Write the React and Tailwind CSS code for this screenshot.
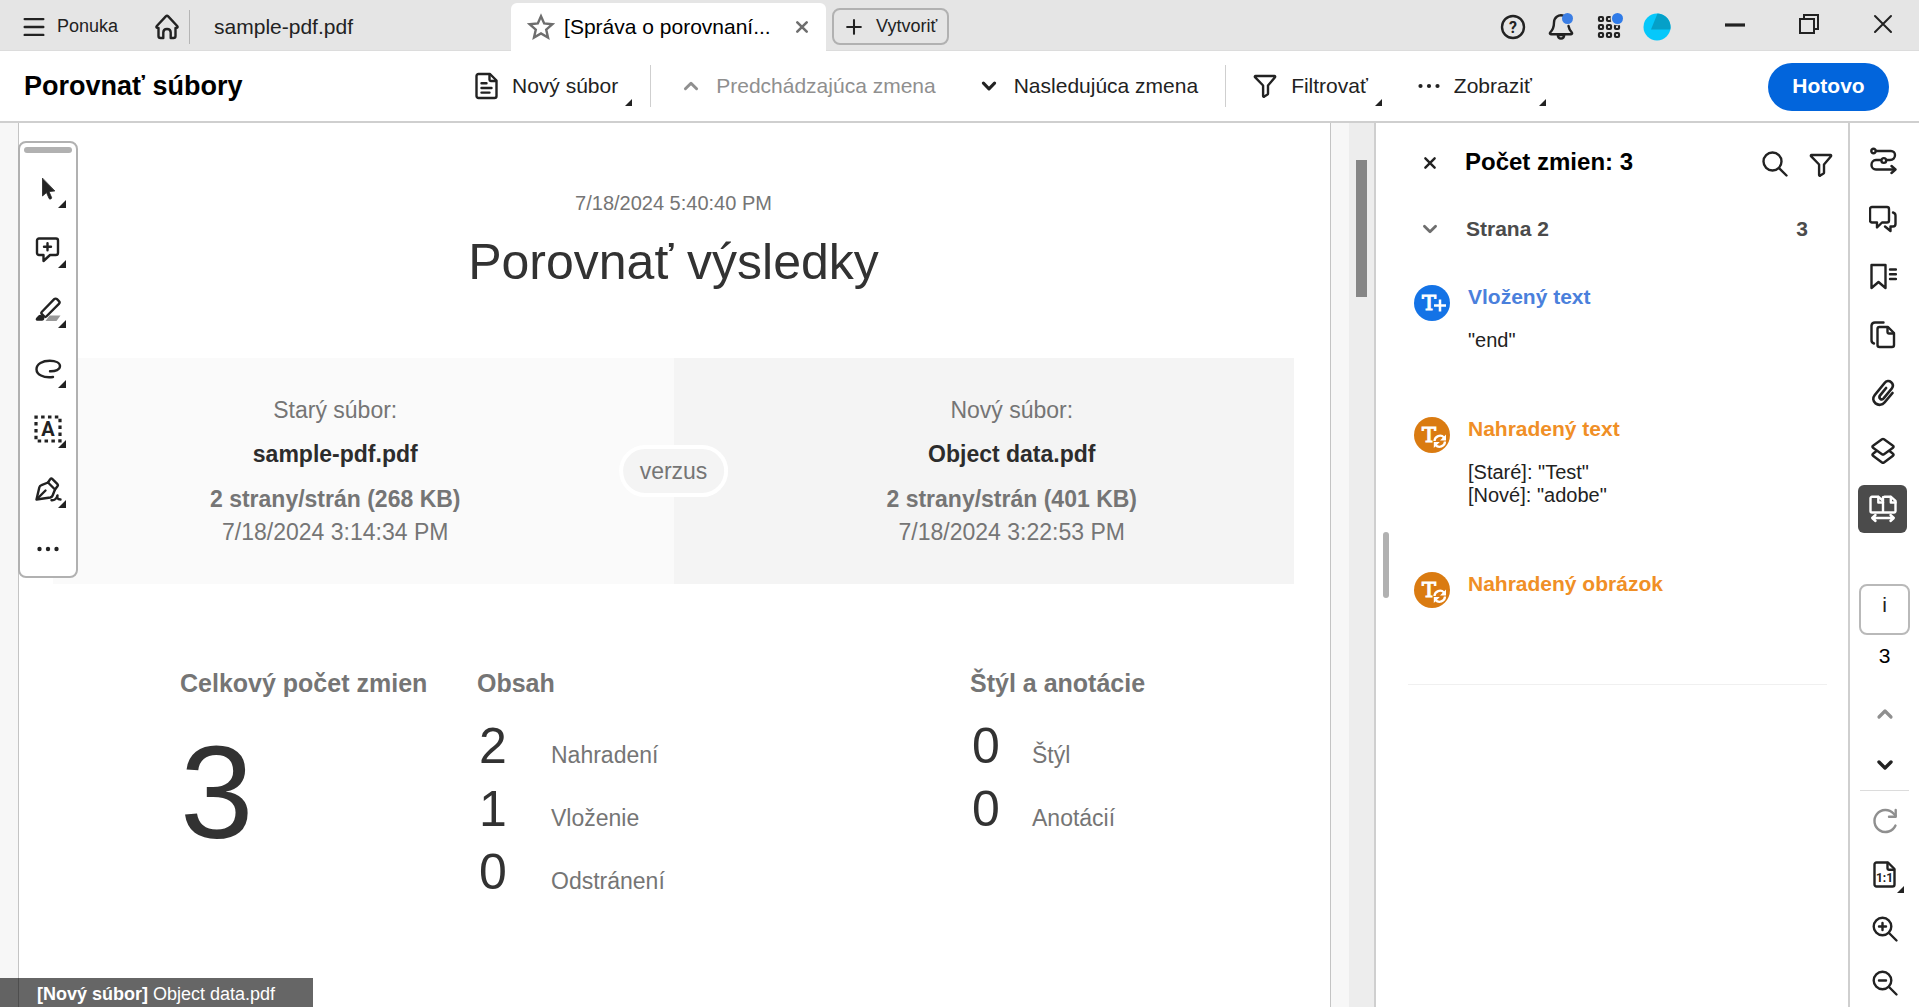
import { useState } from "react";

function Icon({ size = 28, stroke = 2.4, className = "", children }) {
  return (
    <svg
      width={size}
      height={size}
      viewBox="0 0 28 28"
      fill="none"
      stroke="currentColor"
      strokeWidth={stroke}
      strokeLinecap="round"
      strokeLinejoin="round"
      aria-hidden="true"
      className={`shrink-0 ${className}`}
    >
      {children}
    </svg>
  );
}

function Corner({ className = "" }) {
  return (
    <svg viewBox="0 0 8 8" aria-hidden="true" className={`absolute fill-[#222] ${className}`}>
      <path d="M8 0v8H0z" />
    </svg>
  );
}

const FunnelShape = () => (
  <path d="M4.5 4h19c.6 0 .9.7.5 1.2l-7 8.3v8.2c0 .4-.2.7-.5.9l-3.2 2c-.6.3-1.2 0-1.2-.6V13.500L4 5.200C3.600 4.700 3.900 4 4.500 4z" />
);

const ChevronUp = (props) => (
  <Icon {...props}>
    <path d="M8 17l6-6 6 6" />
  </Icon>
);

const ChevronDown = (props) => (
  <Icon {...props}>
    <path d="M8 11l6 6 6-6" />
  </Icon>
);

const Dots = () => (
  <Icon>
    <g fill="currentColor" stroke="none">
      <circle cx="5.500" cy="14" r="2.100" />
      <circle cx="14" cy="14" r="2.100" />
      <circle cx="22.500" cy="14" r="2.100" />
    </g>
  </Icon>
);

const quickTools = [
  {
    name: "Vybrať",
    corner: true,
    icon: (
      <path
        d="M8.500 3.500v17.500l4-3.400 2.600 6c.5 1.100 3 .2 2.500-1.100l-2.600-5.900 5.500-.6z"
        fill="currentColor"
        strokeWidth="0.800"
      />
    ),
  },
  {
    name: "Pridať komentár",
    corner: true,
    icon: (
      <>
        <path d="M5 3.500h17a2 2 0 0 1 2 2V18a2 2 0 0 1-2 2h-6l-6.500 6v-6H5a2 2 0 0 1-2-2V5.500a2 2 0 0 1 2-2z" />
        <path d="M13.500 8.300v6.900M10 11.800h7" />
      </>
    ),
  },
  {
    name: "Zvýrazniť",
    corner: true,
    icon: (
      <>
        <path d="M15.500 20.500h11l-4 5.500h-11z" fill="#999" stroke="none" />
        <path d="M7.700 17L20.200 4.200c.8-.8 2-.8 2.800 0l1.900 1.900c.8.8.8 2 0 2.800L12.300 21.500c-.6.600-1.300.6-1.900 0l-2.700-2.600c-.6-.600-.6-1.300 0-1.900z" />
        <path d="M5 21c1-.9 3-.4 4.200 1.200.9 1.300.3 2.800-1 2.800H3.200c-.9 0-.9-.8-.5-1.500z" fill="currentColor" strokeWidth="1.500" />
      </>
    ),
  },
  {
    name: "Kresliť",
    corner: true,
    icon: (
      <path d="M16 16.300c5.500.2 10-1.700 10-5.200 0-3.300-4.300-5.300-10.200-5.300C8.500 5.800 2.500 9 2.500 14.200c0 5.200 6.500 9.100 16.500 7.800" />
    ),
  },
  {
    name: "Pridať text",
    corner: true,
    icon: (
      <>
        <rect x="2" y="2" width="24" height="24" strokeWidth="3.200" strokeDasharray="3.500 3.357" strokeDashoffset="1.750" strokeLinecap="butt" strokeLinejoin="miter" />
        <text x="14" y="20.500" textAnchor="middle" fontFamily="Roboto" fontWeight="700" fontSize="20" fill="currentColor" stroke="none">
          A
        </text>
      </>
    ),
  },
  {
    name: "Podpísať",
    corner: true,
    icon: (
      <>
        <path d="M2.500 24.500L5.300 12.500c.3-1.300 1-2 2.200-2.400l6.500-2.600 7 7-2.400 6c-.4 1.100-1.200 1.700-2.300 2L2.500 24.500z" />
        <path d="M14 7.500l2.200-3.300c.5-.8 1.400-.9 2-.3l5.300 5.300c.6.700.6 1.500 0 2L21 14.500M3.500 23.500l8-8" />
        <path d="M17.500 25.200c3.500.3 5-1.600 6-4.700-.5 2.600-.2 4 3 4" />
      </>
    ),
  },
  {
    name: "Ďalšie nástroje",
    icon: (
      <g fill="currentColor" stroke="none">
        <circle cx="5.500" cy="14" r="2.200" />
        <circle cx="14" cy="14" r="2.200" />
        <circle cx="22.500" cy="14" r="2.200" />
      </g>
    ),
  },
];

const railTools = [
  {
    name: "Postup",
    icon: (
      <>
        <circle cx="4.500" cy="4" r="2.200" />
        <path d="M7 4h15a4 4 0 0 1 4 4c0 3-2 5-5 5h-2.500M11.500 13H7a4.800 4.800 0 0 0-4.500 5 4.500 4.500 0 0 0 4.500 4.500h17.500" />
        <ellipse cx="14.800" cy="13.500" rx="2.400" ry="2.400" />
        <path d="M22.500 19l4 3.500-4 3.500" />
      </>
    ),
  },
  {
    name: "Komentáre",
    icon: (
      <>
        <path d="M3 2h15a2 2 0 0 1 2 2v11.500a2 2 0 0 1-2 2h-5L8 22.500v-5H3a2 2 0 0 1-2-2V4a2 2 0 0 1 2-2z" />
        <path d="M24 7.500c1.700.5 2.500 1.400 2.500 3V19a2.500 2.500 0 0 1-2.500 2.500h-2.500V26L16 21.500" />
      </>
    ),
  },
  {
    name: "Záložky",
    icon: (
      <>
        <path d="M2.500 2h14v23l-7-6-7 6z" />
        <path d="M21 6.500h6M21 11.300h6M21 16h6" />
      </>
    ),
  },
  {
    name: "Strany",
    icon: (
      <>
        <path d="M5 22.500A3.500 3.500 0 0 1 2.500 19V4.500A3.500 3.500 0 0 1 6 1.500h8.500" />
        <path d="M10.500 6h8.500l6 6v12a2 2 0 0 1-2 2H10.500a2 2 0 0 1-2-2V8a2 2 0 0 1 2-2z" />
        <path d="M18.500 6.500v4.800c0 .8.500 1.200 1.200 1.200h5" />
      </>
    ),
  },
  {
    name: "Prílohy",
    icon: (
      <path
        strokeWidth="2.700"
        d="M23.500 14l-8 9.500c-2.300 2.700-6.200 3-8.900.9-2.700-2.200-3-5.700-.8-8.400l9.800-12c1.700-2.100 4.600-2.400 6.600-.8 2 1.600 2.300 4.200.6 6.300l-8 9.700c-1 1.300-2.400 1.400-3.500.6-1.100-.9-1.200-2.300-.2-3.500l6-7.300"
      />
    ),
  },
  {
    name: "Vrstvy",
    icon: (
      <>
        <path d="M13 2.300c.6-.4 1.400-.4 2 0l9 6.500c.8.5.8 1.300 0 1.900l-9 6.500c-.6.400-1.400.4-2 0l-9-6.500c-.8-.6-.8-1.400 0-1.900z" />
        <path d="M7.500 14L4 16.800c-.8.600-.8 1.300 0 1.900l9 6.800c.6.400 1.400.4 2 0l9-6.800c.8-.6.8-1.300 0-1.900L20.500 14" />
      </>
    ),
  },
  {
    name: "Porovnať súbory",
    active: true,
    icon: (
      <>
        <path d="M14 2.200v15.300M3 1.800h6.500l4.500 4V17.500H3a1.500 1.500 0 0 1-1.500-1.500V3.300A1.500 1.500 0 0 1 3 1.800zM15.500 1.800H22l4.500 4V16a1.500 1.500 0 0 1-1.500 1.500H14" />
        <path d="M9.300 2v5.500H14M21.800 2v5.500h4.700" />
        <path d="M3.500 23h21M6.500 20l-3.300 3 3.300 3M21.500 20l3.300 3-3.300 3" />
      </>
    ),
  },
];

const changes = [
  { kind: "insert", title: "Vložený text", lines: ['"end"'] },
  { kind: "replace", title: "Nahradený text", lines: ['[Staré]: "Test"', '[Nové]: "adobe"'] },
  { kind: "replace", title: "Nahradený obrázok", lines: [] },
];

const contentStats = [
  [2, "Nahradení"],
  [1, "Vloženie"],
  [0, "Odstránení"],
];

const styleStats = [
  [0, "Štýl"],
  [0, "Anotácií"],
];

function TitleBar() {
  return (
    <header className="flex h-[51px] shrink-0 items-center border-b border-[#dcdcdc] bg-[#e5e5e5] pt-[3px] text-[18px] text-[#222]">
      <button className="flex items-center gap-2.5 pl-[21px]">
        <Icon size={26} stroke={2.6}>
          <path d="M4 5.500h20M4 14h20M4 22.500h20" />
        </Icon>
        Ponuka
      </button>
      <button aria-label="Domov" className="ml-[35px]">
        <Icon>
          <path d="M3.800 13L12.800 3.400c.7-.7 1.700-.7 2.400 0L24.200 13c.8.900.4 1.900-.7 1.900h-1V23a2 2 0 0 1-2 2h-2.800v-5.500c0-2.200-1.400-3.500-3.700-3.500s-3.700 1.300-3.700 3.500V25H7.500a2 2 0 0 1-2-2v-8.100h-1c-1.100 0-1.500-1-.7-1.900z" />
        </Icon>
      </button>
      <span className="ml-2 h-[34px] w-px bg-[#b5b5b5]"></span>
      <button className="h-full w-[321px] pl-6 text-left text-[21px]">sample-pdf.pdf</button>
      <div className="flex h-[48px] w-[315px] shrink-0 items-center rounded-t-md bg-white pl-4 pr-3 text-[21px] text-black">
        <Icon size={28} className="text-[#6e6e6e]">
          <path d="M14 3.200l3.200 7.300 8 .8-6 5.300 1.800 7.900-7-4.100-7 4.100 1.800-7.900-6-5.300 8-.8z" strokeLinejoin="miter" />
        </Icon>
        <span className="ml-[9px] whitespace-nowrap">[Správa o porovnaní...</span>
        <button aria-label="Zavrieť kartu" className="ml-auto text-[#6e6e6e]">
          <Icon size={24} stroke={3}>
            <path d="M8.500 8.500l11 11M19.500 8.500l-11 11" />
          </Icon>
        </button>
      </div>
      <button className="ml-1.5 flex h-[37px] items-center gap-2.5 rounded-lg border-2 border-[#b1b1b1] pl-2 pr-2.5">
        <Icon size={24}>
          <path d="M14 6v16M6 14h16" />
        </Icon>
        Vytvoriť
      </button>

      <div className="ml-auto flex items-center pr-[22px]">
        <div className="flex items-center gap-5">
          <button aria-label="Pomocník">
            <Icon>
              <circle cx="14" cy="14" r="11" />
              <text x="14" y="20" textAnchor="middle" fontFamily="Roboto" fontWeight="700" fontSize="16" fill="currentColor" stroke="none">
                ?
              </text>
            </Icon>
          </button>
          <button aria-label="Upozornenia" className="relative">
            <Icon>
              <path d="M17 2.800C11 1 7 4.800 7 9.500c0 5-.8 7-3.800 10-.7.800-.3 1.700.7 1.700h20.200c1 0 1.400-.9.700-1.700-1.800-2-2.800-3.500-3.300-6.500" />
              <path d="M10.800 22c.2 4.800 6.200 4.800 6.400 0z" />
            </Icon>
            <span className="absolute top-0 right-0.5 size-[11px] rounded-full bg-[#3b7ee4]"></span>
          </button>
          <button aria-label="Aplikácie" className="relative">
            <Icon stroke={2.200}>
              {[6, 14, 22].map((y) =>
                [6, 14, 22].map((x) => (
                  <rect key={`${x}-${y}`} x={x - 2} y={y - 2} width="4" height="4" rx="1" />
                ))
              )}
              <circle cx="22.500" cy="5.500" r="7" fill="#e5e5e5" stroke="none" />
            </Icon>
            <span className="absolute top-0 right-0 size-[11px] rounded-full bg-[#2f7be8]"></span>
          </button>
          <button aria-label="Účet">
            <svg width="28" height="28" viewBox="0 0 28 28" aria-hidden="true">
              <circle cx="14" cy="14" r="13.500" fill="#05c8fb" />
              <path d="M8 16.500L14.500.5A13.500 13.500 0 0 1 27.300 16.500z" fill="#05a0c8" />
            </svg>
          </button>
        </div>
        <div className="ml-[50px] flex items-center gap-[46px] pb-1.5">
          <button aria-label="Minimalizovať">
            <Icon stroke={3.200}>
              <path d="M4 15h20" strokeLinecap="butt" />
            </Icon>
          </button>
          <button aria-label="Obnoviť">
            <Icon stroke={2}>
              <path d="M5 9h14v14H5zM9 8.500V5h14v14h-3.500" strokeLinejoin="miter" />
            </Icon>
          </button>
          <button aria-label="Zavrieť">
            <Icon stroke={2}>
              <path d="M6 6l16 16M22 6L6 22" />
            </Icon>
          </button>
        </div>
      </div>
    </header>
  );
}

function Toolbar() {
  return (
    <div className="flex h-[72px] shrink-0 items-center border-b-2 border-[#cfcfcf] bg-white pl-6 pr-[30px] text-[21px] text-[#222]">
      <h1 className="w-[449px] shrink-0 text-[27px] font-bold text-black">Porovnať súbory</h1>
      <button className="relative flex items-center gap-[11px] pr-3.5">
        <Icon>
          <path d="M5.500 2H17l6.500 6.500V24a2 2 0 0 1-2 2h-16a2 2 0 0 1-2-2V4a2 2 0 0 1 2-2z" />
          <path d="M16.500 2.500V7.800c0 .8.500 1.200 1.200 1.200h5.300M8.500 11.200h5M8.500 16h10M8.500 20.600h8" />
        </Icon>
        Nový súbor
        <Corner className="right-0 -bottom-1 size-[7px]" />
      </button>
      <span className="ml-[18px] h-[42px] w-px bg-[#cfcfcf]"></span>
      <button disabled className="ml-[27px] flex items-center gap-3 text-[#8f8f8f]">
        <ChevronUp size={26} stroke={3.200} />
        Predchádzajúca zmena
      </button>
      <button className="ml-10 flex items-center gap-3">
        <ChevronDown size={26} stroke={3.400} />
        Nasledujúca zmena
      </button>
      <span className="ml-[27px] h-[42px] w-px bg-[#cfcfcf]"></span>
      <button className="relative ml-[25px] flex items-center gap-3 pr-3.5">
        <Icon>
          <FunnelShape />
        </Icon>
        Filtrovať
        <Corner className="right-0 -bottom-1 size-[7px]" />
      </button>
      <button className="relative ml-[33px] flex items-center gap-[11px] pr-3.5">
        <Dots />
        Zobraziť
        <Corner className="right-0 -bottom-1 size-[7px]" />
      </button>
      <button className="mt-0.5 ml-auto h-[48px] w-[121px] rounded-full bg-[#0265dc] pb-0.5 font-bold text-white">
        Hotovo
      </button>
    </div>
  );
}

function QuickTools() {
  return (
    <div className="absolute top-[18px] left-[18px] w-[60px] rounded-lg border-2 border-[#b1b1b1] bg-white px-1 pt-1">
      <div className="h-1.5 rounded-full bg-[#b1b1b1]"></div>
      <div className="mt-1.5 -mb-[3px] flex flex-col">
        {quickTools.map((tool) => (
          <button key={tool.name} aria-label={tool.name} className="relative flex h-[60px] items-center justify-center text-[#222]">
            <Icon>{tool.icon}</Icon>
            {tool.corner && <Corner className="right-1.5 bottom-[11px] size-2" />}
          </button>
        ))}
      </div>
    </div>
  );
}

function FileInfo({ label, name, pages, date, className }) {
  return (
    <div className={`flex-1 pt-[38px] pb-[38px] text-center text-[23px] leading-[28px] text-[#757575] ${className}`}>
      <p>{label}</p>
      <p className="mt-4 font-bold text-[#2c2c2c]">{name}</p>
      <p className="mt-[17px] font-bold">{pages}</p>
      <p className="mt-[5px]">{date}</p>
    </div>
  );
}

function StatList({ title, rows, numberClass }) {
  return (
    <section>
      <h3 className="text-[25px] leading-[30px] font-bold text-[#757575]">{title}</h3>
      <dl className="mt-[17px] pl-0.5">
        {rows.map(([count, label]) => (
          <div key={label} className="flex flex-row-reverse items-baseline justify-end">
            <dt className="text-[23px] text-[#757575]">{label}</dt>
            <dd className={`text-[50px] leading-[63px] text-[#323232] ${numberClass}`}>{count}</dd>
          </div>
        ))}
      </dl>
    </section>
  );
}

function Report() {
  return (
    <main className="min-w-0 flex-1 overflow-hidden border-x border-[#c4c4c4] bg-white pt-[66px] pr-9 pl-[34px]">
      <p className="text-center text-[20px] leading-[28px] text-[#757575]">7/18/2024 5:40:40 PM</p>
      <h2 className="mt-[15px] text-center text-[50px] leading-[60px] text-[#323232]">Porovnať výsledky</h2>

      <div className="relative mt-[66px] flex">
        <FileInfo
          label="Starý súbor:"
          name="sample-pdf.pdf"
          pages="2 strany/strán (268 KB)"
          date="7/18/2024 3:14:34 PM"
          className="bg-[#fafafa] pr-14"
        />
        <FileInfo
          label="Nový súbor:"
          name="Object data.pdf"
          pages="2 strany/strán (401 KB)"
          date="7/18/2024 3:22:53 PM"
          className="bg-[#f4f4f4] pl-14"
        />
        <span className="absolute top-1/2 left-1/2 flex h-[52px] -translate-x-1/2 -translate-y-1/2 items-center rounded-full border-4 border-white bg-[#f4f4f4] px-[17px] text-[23px] text-[#757575]">
          verzus
        </span>
      </div>

      <div className="mt-[84px] grid grid-cols-[297px_493px_1fr] pl-[127px]">
        <section>
          <h3 className="text-[25px] leading-[30px] font-bold text-[#757575]">Celkový počet zmien</h3>
          <p className="mt-[29px] text-[132px] leading-[132px] text-[#323232]">3</p>
        </section>
        <StatList title="Obsah" rows={contentStats} numberClass="w-[72px]" />
        <StatList title="Štýl a anotácie" rows={styleStats} numberClass="w-[60px]" />
      </div>
    </main>
  );
}

function ChangeBadge({ kind }) {
  return (
    <svg
      width="36"
      height="36"
      viewBox="0 0 36 36"
      aria-hidden="true"
      fill="none"
      stroke="#fff"
      className="mt-0.5 shrink-0"
    >
      <circle cx="18" cy="18" r="18" fill={kind === "insert" ? "#1473e6" : "#da7b11"} stroke="none" />
      <text x="15" y="25" textAnchor="middle" fontFamily="DejaVu Serif" fontWeight="400" fontSize="21" fill="#fff" strokeWidth="1.100">
        T
      </text>
      {kind === "insert" ? (
        <>
          <path d="M26 13v15M19 20.500h14" stroke="#1473e6" strokeWidth="5" />
          <path d="M26 14.500v12M20 20.500h12" strokeWidth="2.500" />
        </>
      ) : (
        <>
          <circle cx="26" cy="24" r="7" fill="#da7b11" stroke="none" />
          <path d="M20.500 24a5.500 5.500 0 0 1 9.500-3.500M31 24.500a5.500 5.500 0 0 1-9.500 3.500" strokeWidth="2.300" />
          <path d="M32 17.500v6h-6zM19.800 31v-6h6z" fill="#fff" stroke="none" />
        </>
      )}
    </svg>
  );
}

function ChangesPanel() {
  const [open, setOpen] = useState(true);

  return (
    <aside className="relative w-[474px] shrink-0 border-l-2 border-[#cfcfcf] bg-white pt-6 pr-[21px] pl-8">
      <span className="absolute top-[409px] left-[7px] h-[66px] w-1.5 rounded-full bg-[#b1b1b1]"></span>

      <div className="flex h-[30px] items-center pl-[9px]">
        <button aria-label="Zavrieť panel" className="mt-0.5 text-[#222]">
          <Icon size={26} stroke={2.600}>
            <path d="M9 9l10 10M19 9L9 19" />
          </Icon>
        </button>
        <h2 className="ml-[22px] text-[24px] font-bold text-black">Počet zmien: 3</h2>
        <button aria-label="Hľadať" className="mt-1 ml-auto text-[#222]">
          <Icon>
            <circle cx="11.500" cy="11.500" r="9" />
            <path d="M18.300 18.300l7.200 7.200" />
          </Icon>
        </button>
        <button aria-label="Filtrovať zmeny" className="mt-1.5 -mr-2 ml-[18px] text-[#222]">
          <Icon>
            <FunnelShape />
          </Icon>
        </button>
      </div>

      <button
        onClick={() => setOpen(!open)}
        aria-expanded={open}
        className="mt-[38px] flex w-full items-center pr-[19px] pl-[9px] text-[21px] leading-[28px] font-bold text-[#4b4b4b]"
      >
        <ChevronDown size={26} stroke={3} className="text-[#6e6e6e]" />
        <span className="ml-[23px]">Strana 2</span>
        <span className="ml-auto">3</span>
      </button>

      {open && (
        <ul className="mt-10 flex flex-col gap-[63px] border-b border-[#f0f0f0] pb-[76px]">
          {changes.map((change) => (
            <li key={change.title} className="flex gap-[18px] pl-1.5">
              <ChangeBadge kind={change.kind} />
              <div>
                <h3
                  className={
                    change.kind === "insert"
                      ? "text-[21px] leading-[28px] font-bold text-[#4a80dc]"
                      : "text-[21px] leading-[28px] font-bold text-[#f08f26]"
                  }
                >
                  {change.title}
                </h3>
                {change.lines.length > 0 && (
                  <div className="mt-[18px] text-[20px] leading-[23px] text-[#222]">
                    {change.lines.map((line) => (
                      <p key={line}>{line}</p>
                    ))}
                  </div>
                )}
              </div>
            </li>
          ))}
        </ul>
      )}
    </aside>
  );
}

function ToolRail() {
  const [page, setPage] = useState("i");

  return (
    <nav className="flex w-[71px] shrink-0 flex-col items-center border-l-2 border-[#cfcfcf] bg-white pt-3.5 text-[#222]">
      <div className="flex flex-col gap-2.5 pr-1">
        {railTools.map((tool) => (
          <button
            key={tool.name}
            aria-label={tool.name}
            className={
              tool.active
                ? "flex h-12 w-[49px] items-center justify-center rounded-md bg-[#4b4b4b] text-white"
                : "flex h-12 w-[49px] items-center justify-center"
            }
          >
            <Icon>{tool.icon}</Icon>
          </button>
        ))}
      </div>

      <input
        aria-label="Číslo strany"
        value={page}
        onChange={(e) => setPage(e.target.value)}
        className="mt-[51px] h-[51px] w-[51px] shrink-0 rounded-lg border-2 border-[#b9b9b9] pb-2.5 text-center text-[21px]"
      />
      <span className="mt-[7px] text-[21px] leading-[28px] text-black">3</span>
      <button aria-label="Predchádzajúca strana" disabled className="mt-[18px] flex h-[51px] shrink-0 items-center text-[#8f8f8f]">
        <ChevronUp stroke={3.200} />
      </button>
      <button aria-label="Nasledujúca strana" className="flex h-[51px] shrink-0 items-center">
        <ChevronDown stroke={3.400} />
      </button>
      <span className="h-px w-[49px] shrink-0 bg-[#dcdcdc]"></span>

      <button aria-label="Otočiť" disabled className="mt-[3px] flex h-[54px] shrink-0 items-center text-[#8f8f8f]">
        <Icon>
          <path d="M24.500 18.500A11 11 0 1 1 22.500 6.500l2 2.300" />
          <path d="M24.700 3v6.700H18" />
        </Icon>
      </button>
      <button aria-label="Skutočná veľkosť" className="relative flex h-[54px] w-[49px] shrink-0 items-center justify-center">
        <Icon>
          <path d="M5.500 1.500H17l6.500 6.500v15.500a2 2 0 0 1-2 2h-16a2 2 0 0 1-2-2v-20a2 2 0 0 1 2-2z" />
          <path d="M16.500 2v5.500c0 .8.500 1.200 1.200 1.200H23" />
          <text x="13.500" y="21" textAnchor="middle" fontFamily="Roboto" fontWeight="700" fontSize="12" fill="currentColor" stroke="none">
            1:1
          </text>
        </Icon>
        <Corner className="right-[5px] bottom-[9px] size-[7px]" />
      </button>
      <button aria-label="Priblížiť" className="flex h-[54px] shrink-0 items-center">
        <Icon>
          <circle cx="11.500" cy="11.500" r="8.800" />
          <path d="M18 18l7.500 7.500M11.500 8v7M8 11.500h7" />
        </Icon>
      </button>
      <button aria-label="Oddialiť" className="flex h-[54px] shrink-0 items-center">
        <Icon>
          <circle cx="11.500" cy="11.500" r="8.800" />
          <path d="M18 18l7.500 7.500M8 11.500h7" />
        </Icon>
      </button>
    </nav>
  );
}

export default function App() {
  return (
    <div className="flex h-screen flex-col overflow-hidden bg-white font-['Liberation_Sans',sans-serif] leading-normal">
      <TitleBar />
      <Toolbar />
      <div className="relative flex min-h-0 flex-1">
        <div className="w-[18px] shrink-0 bg-[#f7f7f7]"></div>
        <Report />
        <div className="w-[18px] shrink-0 bg-[#f7f7f7]"></div>
        <div className="w-[25px] shrink-0 bg-[#ededed] pt-[37px]">
          <div className="mx-auto h-[137px] w-[11px] bg-[#868686]"></div>
        </div>
        <ChangesPanel />
        <ToolRail />
        <QuickTools />
        <p className="absolute bottom-0 left-0 h-[29px] w-[313px] bg-black/60 pl-[37px] text-[18px] leading-[32px] text-white">
          <strong>[Nový súbor]</strong> Object data.pdf
        </p>
      </div>
    </div>
  );
}
